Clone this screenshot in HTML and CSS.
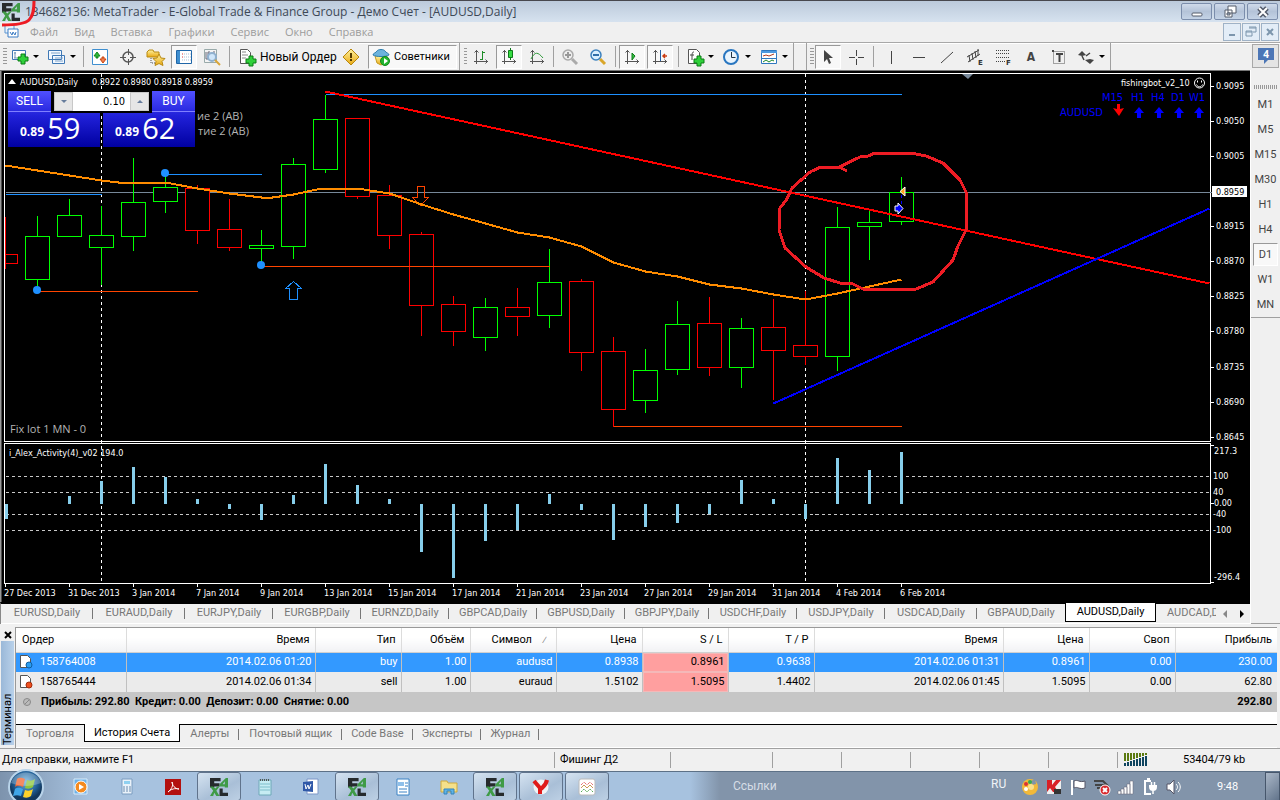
FILE: index.html
```html
<!DOCTYPE html>
<html lang="ru">
<head>
<meta charset="utf-8">
<title>MetaTrader - AUDUSD,Daily</title>
<link rel="stylesheet" href="styles.css">
</head>
<body>
<svg class="defs" aria-hidden="true">
  <defs>
    <symbol id="logo" viewBox="0 0 17 17">
      <path fill="#262a2c" d="M0 0h10v3H4v2h5v3H4v1H0z"/>
      <path fill="#3f9b46" d="M15 0h2v6h0v3h-3V8H9V6zM14 3l-2 3h2z"/>
      <path fill="#3f9b46" d="M0 8h3l2 2 2-2h2l-3 4 3 5H6l-2-3-1 3H0l3-5z"/>
      <path fill="#262a2c" d="M9 10h3v4h5v3H9z"/>
    </symbol>
    <symbol id="plus" viewBox="0 0 12 12"><path d="M4 1h4v3h3v4H8v3H4V8H1V4h3z" fill="#2fd03a" stroke="#0a7d14"/></symbol>
    <symbol id="axes" viewBox="0 0 20 20"><path d="M5.500 3v14M3 14.500h14M3.500 5.500l2-2 2 2M14.500 12.500l2 2-2 2" fill="none" stroke="#555"/></symbol>
    <symbol id="up" viewBox="0 0 12 12"><path d="M6 0l5 6H8v5H4V6H1z"/></symbol>
    <linearGradient id="gold" x2="0" y2="1"><stop stop-color="#fff3a0"/><stop offset="1" stop-color="#e8a813"/></linearGradient>
    <radialGradient id="orb" cx=".5" cy=".35"><stop stop-color="#6fb3e0"/><stop offset=".7" stop-color="#1f5c93"/><stop offset="1" stop-color="#12375c"/></radialGradient>
  </defs>
</svg>

<div class="window">
  <header class="titlebar">
    <svg class="app-logo" width="18" height="18"><use href="#logo"/></svg>
    <h1 class="title">134682136: MetaTrader - E-Global Trade &amp; Finance Group - Демо Счет - [AUDUSD,Daily]</h1>
    <svg class="scribble" width="40" height="28"><path d="M34 0c0 10-1 15-5 19-4 4-14 5-27 5" fill="none" stroke="#ed1c24" stroke-width="3"/></svg>
    <div class="caption-buttons">
      <button class="caption" aria-label="Свернуть"><svg width="16" height="14"><rect x="3" y="8" width="10" height="3" rx="1" fill="#fff" stroke="#555c6b"/></svg></button>
      <button class="caption" aria-label="Восстановить"><svg width="16" height="14"><path d="M6 1h8v7H6zM3 5h7v7H3z" fill="#fff" stroke="#555c6b"/><path d="M5 8h3v2H5z" fill="#a9b7c9" stroke="#555c6b"/></svg></button>
      <button class="caption" aria-label="Закрыть"><svg width="16" height="14"><path d="M4 3l8 8M12 3l-8 8" stroke="#555c6b" stroke-width="5"/><path d="M4 3l8 8M12 3l-8 8" stroke="#fff" stroke-width="2"/></svg></button>
    </div>
  </header>

  <nav class="menubar">
    <svg class="menu-icon" width="16" height="16"><path d="M1 1h9v8H1z" fill="#eaf3fc" stroke="#5b94d1"/><path d="M4 5h10v8H4z" fill="#fff" stroke="#3c7cc4"/><path d="M6 8l2 3 1-3 2 3 1-3" fill="none" stroke="#3c7cc4"/></svg>
    <button class="menu">Файл</button><button class="menu">Вид</button><button class="menu">Вставка</button><button class="menu">Графики</button><button class="menu">Сервис</button><button class="menu">Окно</button><button class="menu">Справка</button>
    <div class="mdi-buttons">
      <button class="mdi" aria-label="Свернуть окно"><svg width="12" height="12"><path d="M3 9h6" stroke="#7d96ad" stroke-width="2"/></svg></button>
      <button class="mdi" aria-label="Восстановить окно"><svg width="12" height="12"><path d="M4 1h7v5H8M1 5h6v5H1zM4 2h7M1 6h6" fill="none" stroke="#7d96ad"/></svg></button>
      <button class="mdi" aria-label="Закрыть окно"><svg width="12" height="12"><path d="M3 3l6 6M9 3l-6 6" stroke="#7d96ad" stroke-width="2"/></svg></button>
    </div>
  </nav>

  <div class="toolbar">
    <div class="group g-main">
      <i class="grip"></i>
      <button class="split" aria-label="Новый график"><svg width="20" height="20"><path d="M2.500 3.500h13v9H2.500z" fill="#fff" stroke="#3f78b5"/><path d="M5 5v6M4 6h2M4 11h3" stroke="#6a8fb5"/><use href="#plus" x="7" y="6" width="12" height="12"/></svg><b class="drop"></b></button>
      <button class="split" aria-label="Профили"><svg width="20" height="20"><path d="M1.500 3.500h13v9H1.500zM5.500 8.500h12v8H5.500z" fill="#f2f8ff" stroke="#3f78b5"/><path d="M4 6h9M8 11h8M8 14h8" stroke="#7ea3c9"/></svg><b class="drop"></b></button>
      <i class="sep s5"></i>
      <button class="tool" aria-label="Обзор рынка"><svg width="20" height="20"><path d="M2.500 2.500h15v15H2.500z" fill="#fff" stroke="#3f8fd0"/><path d="M7 5l3 4H8v2H6V9H4z" fill="#2fb53a" stroke="#118a1c"/><path d="M13 16l3-4h-2v-2h-2v2h-2z" fill="#f08050" stroke="#c84410"/></svg></button>
      <button class="tool" aria-label="Окно данных"><svg width="20" height="20"><circle cx="10" cy="10" r="5" fill="none" stroke="#555" stroke-width="1.500"/><path d="M10.500 2v6M10.500 12v6M2 10.500h6M12 10.500h6" stroke="#555"/></svg></button>
      <button class="tool" aria-label="Навигатор"><svg width="20" height="20"><path d="M1 5l2-2h4l1 2h5v5H1z" fill="url(#gold)" stroke="#b98a12"/><path d="M5 11v5h4" fill="none" stroke="#555" stroke-dasharray="1 1"/><path d="M13 7l2 4 4 .5-3 3 1 4-4-2-4 2 1-4-3-3 4-.5z" fill="url(#gold)" stroke="#b98a12"/></svg></button>
      <button class="tool pressed" aria-label="Терминал"><svg width="20" height="20"><path d="M2.500 3.500h15v13H2.500z" fill="#fff" stroke="#1f66a8"/><path d="M3 4h3v12H3z" fill="#3f8fd0"/><path d="M8 7h1M8 10h1" stroke="#d33"/><path d="M10 7h7M10 10h7M8 13h9" stroke="#a9bfd5" stroke-dasharray="1 1"/></svg></button>
      <button class="tool" aria-label="Тестер стратегий"><svg width="20" height="20"><path d="M2.500 2.500h12v13h-12z" fill="#f4f4f4" stroke="#9aa"/><path d="M4 5v7h2V5M7 4v4M12 4v3" stroke="#667" fill="none"/><circle cx="10" cy="10" r="4" fill="#cfe6fa" stroke="#8fb0cf" stroke-width="2"/><path d="M13 13l5 5" stroke="#d9a63a" stroke-width="2"/></svg></button>
      <i class="sep s7"></i>
      <button class="labelled order" ><svg width="20" height="20"><path d="M3.500 2.500h7l3 3v11h-10z" fill="#fff" stroke="#555"/><path d="M5 5h4M5 8h6M5 11h4" stroke="#888"/><use href="#plus" x="8" y="8" width="12" height="12"/></svg>Новый Ордер</button>
      <button class="tool" aria-label="MetaEditor"><svg width="20" height="20"><path d="M10 2l8 8-8 8-8-8z" fill="url(#gold)" stroke="#b8860b"/><path d="M10 6v5M10 12v2" stroke="#553c00" stroke-width="2"/></svg></button>
      <button class="labelled advisors pressed"><svg width="20" height="20"><path d="M4 9h12l-2 7-4 2-4-2z" fill="url(#gold)" stroke="#c49a20"/><path d="M2 8c0-2 3-2 4-4 1-2 7-2 8 0 1 2 4 2 4 4-3 2-13 2-16 0z" fill="#6cb3dd" stroke="#2f7fae"/><circle cx="14" cy="14" r="4.500" fill="#22b52e" stroke="#118a1c"/><path d="M13 11l4 3-4 3z" fill="#fff"/></svg>Советники</button>
    </div>
    <div class="group g-charts">
      <i class="grip"></i>
      <button class="tool" aria-label="Бары"><svg width="20" height="20"><use href="#axes"/><path d="M11.500 4v9M9 12.500h3M11 5.500h3" stroke="#1e8c28" fill="none"/></svg></button>
      <button class="tool pressed" aria-label="Свечи"><svg width="20" height="20"><use href="#axes"/><path d="M11.500 1v12" stroke="#0d7a18"/><path d="M9.500 3.500h4v7h-4z" fill="#35dc42" stroke="#0d7a18"/></svg></button>
      <button class="tool" aria-label="Линия"><svg width="20" height="20"><use href="#axes"/><path d="M4 12c4-8 7-7 12-1" stroke="#2f9a3a" fill="none"/></svg></button>
      <i class="sep s5"></i>
      <button class="tool" aria-label="Увеличить"><svg width="20" height="20"><path d="M12 12l5 5" stroke="#aaa" stroke-width="3"/><circle cx="8" cy="8" r="5" fill="#eee" stroke="#aaa" stroke-width="1.500"/><path d="M5 8h6M8 5v6" stroke="#999" stroke-width="2"/></svg></button>
      <button class="tool" aria-label="Уменьшить"><svg width="20" height="20"><path d="M12 12l5 5" stroke="#d9a62a" stroke-width="3"/><circle cx="8" cy="8" r="5" fill="#d8efff" stroke="#3b80bd" stroke-width="1.500"/><path d="M5 8h6" stroke="#2f6ea8" stroke-width="2"/></svg></button>
      <i class="sep s6"></i>
      <button class="tool pressed" aria-label="Автопрокрутка"><svg width="20" height="20"><use href="#axes"/><path d="M10 6l3 3-3 4z" fill="#35c142" stroke="#0d7a18"/></svg></button>
      <button class="tool pressed" aria-label="Сдвиг графика"><svg width="20" height="20"><use href="#axes"/><path d="M10.500 3v11" stroke="#235fa5"/><path d="M17 9h-4M15 7l-2 2 2 2" stroke="#c93a10" fill="none" stroke-width="1.500"/></svg></button>
      <i class="sep s8"></i>
      <button class="split" aria-label="Индикаторы"><svg width="20" height="20"><path d="M3.500 2.500h8l3 3v11h-11z" fill="#fff" stroke="#555"/><path d="M9 5c-2 0-2 1-2 8M5 8h4" stroke="#444" fill="none"/><use href="#plus" x="8" y="8" width="12" height="12"/></svg><b class="drop"></b></button>
      <button class="split" aria-label="Периоды"><svg width="20" height="20"><circle cx="9" cy="10" r="7" fill="#e9f4fd" stroke="#2876c0" stroke-width="2"/><path d="M9.500 5v5.500h4" stroke="#234" fill="none"/></svg><b class="drop"></b></button>
      <button class="split" aria-label="Шаблоны"><svg width="20" height="20"><path d="M2.500 3.500h15v13h-15z" fill="#fff" stroke="#2f78bf"/><path d="M2 5h16" stroke="#4d9ae0" stroke-width="2"/><path d="M2 11.500h15" stroke="#2f78bf"/><path d="M4 9l3-1 3 1 5-2" stroke="#b03a20" fill="none"/><path d="M4 15l3-2 3 2 3-2 2 1" stroke="#1f8c2a" fill="none"/></svg><b class="drop"></b></button>
    </div>
    <div class="group g-gap"></div>
    <div class="group g-draw">
      <i class="grip"></i>
      <button class="tool pressed" aria-label="Курсор"><svg width="20" height="20"><path d="M6 3v12l3-3 2 5 2-1-2-5h4z" fill="#444"/></svg></button>
      <button class="tool" aria-label="Перекрестие"><svg width="20" height="20"><path d="M10.500 3v6M10.500 12v6M3 10.500h6M12 10.500h6" stroke="#444"/></svg></button>
      <i class="sep s7"></i>
      <button class="tool" aria-label="Вертикальная линия"><svg width="20" height="20"><path d="M10.500 4v13" stroke="#444"/></svg></button>
      <button class="tool" aria-label="Горизонтальная линия"><svg width="20" height="20"><path d="M4 10.500h12" stroke="#444"/></svg></button>
      <button class="tool" aria-label="Трендовая линия"><svg width="20" height="20"><path d="M4 16L16 5" stroke="#444"/></svg></button>
      <button class="tool" aria-label="Равноудаленный канал"><svg width="20" height="20"><path d="M2 10L14 3M3 15L15 7M4 8l1 7M7 6l1 7M10 4l1 7M13 2v7" stroke="#444" fill="none"/><text class="glyph" x="13" y="18">E</text></svg></button>
      <button class="tool" aria-label="Линии Фибоначчи"><svg width="20" height="20"><path d="M3 3.500h14M3 6.500h14M3 10.500h14M3 14.500h9" stroke="#444" stroke-dasharray="1 1"/><text class="glyph" x="13" y="18">F</text></svg></button>
      <button class="tool text-a" aria-label="Текст">A</button>
      <button class="tool" aria-label="Текстовая метка"><svg width="20" height="20"><path d="M4.500 4.500h11v12h-11z" fill="none" stroke="#555" stroke-dasharray="1 1"/><path d="M7 7h7M10.500 7v8M3 4h2" stroke="#444" stroke-width="2"/></svg></button>
      <button class="split arrows" aria-label="Стрелки"><svg width="20" height="20"><path d="M6 4l4 4-4 1-4-1zM14 17l-5-4 5-1 4 1z" fill="#444"/><path d="M6 9l2 4M10 9l4-3" stroke="#444" stroke-width="1.500"/></svg><b class="drop"></b></button>
    </div>
    <button class="chat" aria-label="Сообщения"><svg width="20" height="20"><path d="M2 2h16v12h-6l-4 4v-4H2z" fill="#4c76b6"/><text class="chat-count" x="10" y="12">4</text></svg></button>
  </div>

  <main class="workspace">
    <section class="chart-pane">
      <div class="chart">
        <svg class="plot" viewBox="0 70 1250 532" preserveAspectRatio="xMinYMin meet">
          <rect y="70" width="1250" height="532"/>
          <path d="M0 70v532" stroke="#999" stroke-width="3"/><path d="M0 70h1250" stroke="#777" stroke-width="2"/>
          <g class="px" transform="translate(.5 .5)">
            <path class="frame" d="M4 73H1210V441H4zM4 443H1210V583H4z"/>
            <path class="frame" d="M1210 86h3M1210 121h3M1210 156h3M1210 226h3M1210 261h3M1210 296h3M1210 331h3M1210 367h3M1210 402h3M1210 437h3M1210 445h3M1210 503h3M1210 582h3M5 583v3M69 583v3M133 583v3M197 583v3M261 583v3M325 583v3M389 583v3M453 583v3M517 583v3M581 583v3M645 583v3M709 583v3M773 583v3M837 583v3M901 583v3"/>
            <path stroke="#c8c8c8" stroke-dasharray="3 3" d="M5 476H1209M5 492H1209M5 514H1209M5 530H1209"/>
            <path stroke="#fff" stroke-dasharray="3 3" d="M101 73V580M805 73V580"/>
            <path stroke="#778899" d="M5 192H1215"/>
            <path stroke="#1e90ff" d="M5 194H101M165 174H261M325 94H901"/>
            <path stroke="#ff4500" d="M37 291H197M613 426H901"/>
            <path class="bull" d="M37 215V285M69 198V215M101 205V284M133 157V250M165 175V212M261 229V264M293 157V258M325 94V172M485 297V350M549 248V327M645 348V412M677 300V374M741 317V387M837 206V370M869 210V259M901 176V224"/>
            <path class="bull" d="M25 236h24v43h-24zM57 215h24v21h-24zM89 235h24v12h-24zM121 202h24v34h-24zM153 187h24v14h-24zM249 245h24v3h-24zM281 164h24v82h-24zM313 119h24v50h-24zM473 307h24v30h-24zM537 282h24v33h-24zM633 370h24v30h-24zM665 324h24v45h-24zM729 328h24v39h-24zM825 227h24v129h-24zM857 222h24v4h-24zM889 192h24v29h-24z"/>
            <path class="bear" d="M5 216V268M197 184V243M229 198V250M357 117V198M389 184V248M421 231V335M453 295V345M517 287V335M581 278V370M613 336V426M709 296V375M773 298V399M805 290V364"/>
            <path class="bear" d="M5 254h12v9h-12M185 188h24v42h-24zM217 229h24v18h-24zM345 118h24v78h-24zM377 195h24v40h-24zM409 234h24v71h-24zM441 304h24v27h-24zM505 307h24v9h-24zM569 281h24v71h-24zM601 351h24v58h-24zM697 323h24v44h-24zM761 327h24v23h-24zM793 345h24v11h-24z"/>
            <path stroke="#ff4500" d="M261 266H549"/>
            <path stroke="#87ceeb" stroke-width="3" d="M6 503V518M69 503V495M101 503V480M133 503V466M165 503V476M197 503V498M229 503V508M261 503V519M293 503V494M325 503V463M357 503V484M389 503V498M421 503V551M453 503V577M485 503V540M517 503V529M549 503V493M581 503V509M613 503V539M645 503V526M677 503V522M709 503V513M741 503V479M773 503V498M805 503V518M837 503V457M869 503V469M901 503V451"/>
            <path fill="none" stroke="#1e90ff" d="M293 281l8 7h-4v11h-8v-11h-4z"/>
            <path fill="none" stroke="#ff4500" d="M417 186h7v11h4l-8 8l-8 -8h5z"/>
            <path fill="none" stroke="#ff8c00" stroke-width="2" d="M5 165L37 170L69 175L101 180L118 182H165L197 188L229 193L261 197L272 197L293 194L321 188H357L389 193L421 204L453 214L485 223L517 232L549 237L581 246L613 262L645 271L677 276L709 284L741 288L773 294L805 299L837 293L869 286L901 279"/>
            <path stroke="#f00" stroke-width="2" d="M325 91L1209 283"/>
            <path stroke="#00f" stroke-width="2" d="M773 403L1209 208"/>
            <path stroke="#00f" stroke-dasharray="3 3" d="M901 194V206"/>
          </g>
          <g fill="#1e90ff"><circle cx="37" cy="290" r="4"/><circle cx="165" cy="173" r="4"/><circle cx="261" cy="265" r="4"/></g>
          <path d="M905 187v9l-5-4.500z" fill="#ffa51e" stroke="#fff"/>
          <path d="M895 206h3v-3l5 5.500-5 5.500v-3h-3z" fill="#00f" stroke="#fff"/>
          <path fill="none" stroke="#ed1c24" stroke-width="3" stroke-linejoin="round" shape-rendering="crispEdges" d="M847 171L839 167H821L810 172L792 188L787 199L780 208L779 230L785 248L806 267L824 278L840 283H851L863 289H916L933 282L953 260L958 246L966 230V192L960 180L943 163L926 156L911 153H875L868 156L860 157L839 167"/>
          <path d="M962 74h11l-5 5z" fill="#778899"/>
          <path d="M8 84l4-5 4 5z" fill="#fff"/>
          <g class="small">
            <text x="20" y="85">AUDUSD,Daily</text><text x="92" y="85">0.8922 0.8980 0.8918 0.8959</text>
            <text x="1121" y="86">fishingbot_v2_10</text>
            <text x="9" y="456">i_Alex_Activity(4)_v02 194.0</text>
            <text x="1216" y="89">0.9095</text><text x="1216" y="124">0.9050</text><text x="1216" y="159">0.9005</text><text x="1216" y="229">0.8915</text><text x="1216" y="264">0.8870</text><text x="1216" y="299">0.8825</text><text x="1216" y="334">0.8780</text><text x="1216" y="370">0.8735</text><text x="1216" y="405">0.8690</text><text x="1216" y="440">0.8645</text>
            <text x="1214" y="454">217.3</text><text x="1213" y="479">100</text><text x="1213" y="495">40</text><text x="1214" y="506">0.00</text><text x="1213" y="517">-40</text><text x="1213" y="533">-100</text><text x="1214" y="580">-296.4</text>
            <text x="4" y="596">27 Dec 2013</text><text x="68" y="596">31 Dec 2013</text><text x="132" y="596">3 Jan 2014</text><text x="196" y="596">7 Jan 2014</text><text x="260" y="596">9 Jan 2014</text><text x="324" y="596">13 Jan 2014</text><text x="388" y="596">15 Jan 2014</text><text x="452" y="596">17 Jan 2014</text><text x="516" y="596">21 Jan 2014</text><text x="580" y="596">23 Jan 2014</text><text x="644" y="596">27 Jan 2014</text><text x="708" y="596">29 Jan 2014</text><text x="772" y="596">31 Jan 2014</text><text x="836" y="596">4 Feb 2014</text><text x="900" y="596">6 Feb 2014</text>
          </g>
          <rect x="1212" y="186" width="35" height="11" fill="#fff"/><text class="small-dark" x="1216" y="195">0.8959</text>
          <g class="note"><text x="197" y="120">ие 2 (AB)</text><text x="198" y="135">тие 2 (AB)</text><text x="10" y="433">Fix lot 1 MN - 0</text></g>
          <g class="signal"><text x="1102" y="101">M15</text><text x="1131" y="101">H1</text><text x="1151" y="101">H4</text><text x="1171" y="101">D1</text><text x="1189" y="101">W1</text><text x="1060" y="116">AUDUSD</text></g>
          <g fill="#00f"><use href="#up" x="1133" y="107" width="12" height="12"/><use href="#up" x="1153" y="107" width="12" height="12"/><use href="#up" x="1173" y="107" width="12" height="12"/><use href="#up" x="1193" y="107" width="12" height="12"/></g>
          <path fill="#f00" d="M1117 104h3v5l4-1-5 8-6-8 4 1z"/>
          <g fill="none" stroke="#fff"><circle cx="1199.500" cy="83" r="5"/><path d="M1196.500 84.500c1 3 5 3 6 0M1197.500 80.500v2M1201.500 80.500v2"/></g>
        </svg>
        <div class="trade">
          <button class="deal"><span class="side">SELL</span><span class="quote">0.89 <strong>59</strong></span></button>
          <button class="deal buy"><span class="side">BUY</span><span class="quote">0.89 <strong>62</strong></span></button>
          <div class="lots"><button class="spin down" aria-label="Меньше"></button><input class="lot" value="0.10" aria-label="Объем"><button class="spin up" aria-label="Больше"></button></div>
        </div>
      </div>
      <div class="chart-tabs">
        <button class="ctab wide">EURUSD,Daily</button><button class="ctab wide">EURAUD,Daily</button><button class="ctab">EURJPY,Daily</button><button class="ctab">EURGBP,Daily</button><button class="ctab">EURNZD,Daily</button><button class="ctab">GBPCAD,Daily</button><button class="ctab">GBPUSD,Daily</button><button class="ctab narrow">GBPJPY,Daily</button><button class="ctab">USDCHF,Daily</button><button class="ctab">USDJPY,Daily</button><button class="ctab wide">USDCAD,Daily</button><button class="ctab last">GBPAUD,Daily</button><button class="ctab active">AUDUSD,Daily</button><button class="ctab clipped">AUDCAD,Daily</button>
        <button class="scroll" aria-label="Назад"><svg width="8" height="10"><path d="M6 1v8L2 5z" fill="#888"/></svg></button>
        <button class="scroll" aria-label="Вперед"><svg width="8" height="10"><path d="M2 1v8l4-4z" fill="#000"/></svg></button>
      </div>
    </section>
    <aside class="periods">
      <i class="grip-h"></i>
      <button class="period">M1</button><button class="period">M5</button><button class="period">M15</button><button class="period">M30</button><button class="period">H1</button><button class="period">H4</button><button class="period pressed">D1</button><button class="period">W1</button><button class="period">MN</button>
      <i class="periods-rest"></i>
    </aside>
  </main>

  <section class="terminal">
    <div class="term-side"><button class="term-close" aria-label="Закрыть терминал"><svg width="8" height="8"><path d="M1 1l6 6M7 1l-6 6" stroke="#000" stroke-width="2"/></svg></button><span class="term-name">Терминал</span></div>
    <div class="term-body">
      <table class="orders">
        <colgroup><col class="c-order"><col class="c-time"><col class="c-mid"><col class="c-vol"><col class="c-mid"><col class="c-mid"><col class="c-mid"><col class="c-mid"><col class="c-time"><col class="c-mid"><col class="c-mid"><col class="c-profit"></colgroup>
        <thead><tr><th>Ордер</th><th>Время</th><th>Тип</th><th>Объём</th><th class="sorted">Символ<span class="sort">∕</span></th><th>Цена</th><th>S / L</th><th>T / P</th><th>Время</th><th>Цена</th><th>Своп</th><th>Прибыль</th></tr></thead>
        <tbody>
          <tr class="selected"><td><svg class="doc" width="15" height="16"><path d="M1.500 1.500h7l3 3v9h-10z" fill="#fff" stroke="#555"/><circle cx="10" cy="11" r="3" fill="#2a9df0" stroke="#0d5da0"/></svg>158764008</td><td>2014.02.06 01:20</td><td>buy</td><td>1.00</td><td>audusd</td><td>0.8938</td><td class="hit">0.8961</td><td>0.9638</td><td>2014.02.06 01:31</td><td>0.8961</td><td>0.00</td><td>230.00</td></tr>
          <tr><td><svg class="doc" width="15" height="16"><path d="M1.500 1.500h7l3 3v9h-10z" fill="#fff" stroke="#555"/><circle cx="10" cy="11" r="3" fill="#f0501e" stroke="#a02c0d"/></svg>158765444</td><td>2014.02.06 01:34</td><td>sell</td><td>1.00</td><td>euraud</td><td>1.5102</td><td class="hit">1.5095</td><td>1.4402</td><td>2014.02.06 01:45</td><td>1.5095</td><td>0.00</td><td>62.80</td></tr>
        </tbody>
        <tfoot><tr><td colspan="11"><svg class="dot" width="10" height="10"><circle cx="5" cy="5" r="3.500" fill="#bbb" stroke="#888"/><path d="M3 7l4-4" stroke="#888"/></svg>Прибыль: 292.80 &nbsp;Кредит: 0.00 &nbsp;Депозит: 0.00 &nbsp;Снятие: 0.00</td><td>292.80</td></tr></tfoot>
      </table>
      <div class="term-tabs"><button class="ttab">Торговля</button><button class="ttab active">История Счета</button><button class="ttab">Алерты</button><button class="ttab">Почтовый ящик</button><button class="ttab tight">Code Base</button><button class="ttab tight">Эксперты</button><button class="ttab tight">Журнал</button></div>
    </div>
  </section>

  <footer class="statusbar">
    <span class="st st-help">Для справки, нажмите F1</span><span class="st st-profile">Фишинг Д2</span><span class="st st-date"></span><span class="st st-cell"></span><span class="st st-cell"></span><span class="st st-cell"></span><span class="st st-cell"></span><span class="st st-cell"></span>
    <span class="st st-net"><svg width="26" height="14"><path d="M2 0v8M5 0v8M8 0v7M11 0v6M14 0v5M17 0v4M20 0v3M23 0v2" stroke="#5b7a10" stroke-width="2"/><path d="M2 10v3M5 9v4M8 8v5M11 7v6M14 6v7M17 5v8M20 4v9M23 3v10" stroke="#0f4560" stroke-width="2"/></svg>53404/79 kb</span>
  </footer>

  <div class="taskbar">
    <button class="start" aria-label="Пуск"><svg width="38" height="38"><circle cx="19" cy="19" r="17" fill="url(#orb)" stroke="#b9d4ea" stroke-width="2"/><path d="M10 11c3-2 5-1 8 0l-2 8c-3-1-5-2-8 0z" fill="#f0652f"/><path d="M20 12c3 1 5 1 8-1l-2 8c-3 2-5 2-8 1z" fill="#8cc63e"/><path d="M8 21c3-2 5-1 8 0l-2 7c-3-1-5-1-8 0z" fill="#3fa5e8"/><path d="M18 22c3 1 5 1 8-1l-2 7c-3 2-5 2-8 1z" fill="#fcd12a"/><path d="M4 15c4-14 26-14 30 0-10 4-20 4-30 0z" fill="#fff" opacity=".25"/></svg></button>
    <button class="task" aria-label="Проигрыватель"><svg width="18" height="18"><path d="M2 1h13v15H2z" fill="#6fb2e8" stroke="#d9ecfb"/><circle cx="9" cy="9" r="6" fill="#f58a1f" stroke="#fff"/><path d="M7 6l5 3-5 3z" fill="#fff"/></svg></button>
    <button class="task" aria-label="Калькулятор"><svg width="18" height="18"><path d="M4 1h10v15H4z" fill="#eaf2fa" stroke="#7a9cc0"/><path d="M6 3h6v3H6z" fill="#8fd0f0"/><path d="M5 9h8M5 11h8M5 13h8" stroke="#6a8cb0" stroke-dasharray="2 1"/></svg></button>
    <button class="task" aria-label="Adobe Reader"><svg width="18" height="18"><path d="M1 1h16v16H1z" fill="#b3100f"/><path d="M8 4c2 3-1 8-4 10 3-3 7-4 11-3-4 0-7-4-7-7z" fill="none" stroke="#fff"/></svg></button>
    <button class="task open" aria-label="MetaTrader"><svg width="18" height="18"><use href="#logo"/></svg></button>
    <button class="task" aria-label="Блокнот"><svg width="18" height="18"><path d="M3 2h12v15H3z" fill="#c6ecf3" stroke="#6fa9b8"/><path d="M4 6h10M4 9h10M4 12h10" stroke="#7fbecb"/><path d="M4 2h10" stroke="#555" stroke-width="2" stroke-dasharray="1 1"/></svg></button>
    <button class="task" aria-label="Word"><svg width="18" height="18"><path d="M5 1h11v15H5z" fill="#fff" stroke="#7d97c8"/><path d="M1 4l10-1v11L1 13z" fill="#2f58a8"/><path d="M3 6l1 5 2-4 1 4 2-5" fill="none" stroke="#fff"/></svg></button>
    <button class="task open" aria-label="MetaTrader 2"><svg width="18" height="18"><use href="#logo"/></svg></button>
    <button class="task" aria-label="WordPad"><svg width="18" height="18"><path d="M3 1h12v16H3z" fill="#fff" stroke="#3b82c4"/><path d="M4 4h6v4H4z" fill="#8fc0ea"/><path d="M11 5h3M11 8h3M5 11h8M5 14h8" stroke="#3b82c4"/></svg></button>
    <button class="task" aria-label="Проводник"><svg width="18" height="18"><path d="M1 3h6l1 2h9v9H1z" fill="#f5e08a" stroke="#cfa93c"/><path d="M4 16v-5h10v5h-3v-3H7v3z" fill="#5fb3e6" stroke="#3484bb"/></svg></button>
    <button class="task open" aria-label="MetaTrader 3"><svg width="18" height="18"><use href="#logo"/></svg></button>
    <button class="task open" aria-label="Яндекс"><svg width="18" height="18"><circle cx="9" cy="9" r="7.500" fill="#f1f3f5"/><path d="M2 3l6 7v6M15 2c-1 5-4 7-6 9" fill="none" stroke="#e01b1b" stroke-width="4"/></svg></button>
    <button class="task open" aria-label="Графики"><svg width="18" height="18"><rect x="1" y="1" width="16" height="16" rx="2" fill="#fff" stroke="#bbb"/><path d="M3 7l3-3 3 3 3-3 3 3" fill="none" stroke="#d33" stroke-dasharray="1 1"/><path d="M3 10l3-3 3 3 3-3 3 3" fill="none" stroke="#c95"/><path d="M3 14l3-3 3 3 3-3 3 3" fill="none" stroke="#5a5" stroke-dasharray="2 1"/></svg></button>
    <span class="links">Ссылки</span>
    <span class="lang">RU</span>
    <div class="tray">
      <svg width="18" height="18"><circle cx="9" cy="9" r="8" fill="#f2b93a"/><path d="M10 3l4-2 1 5-4 1z" fill="#8293a9"/><circle cx="5" cy="6" r="2" fill="#d33"/><circle cx="9" cy="4" r="2" fill="#3a5"/><circle cx="5" cy="11" r="2" fill="#fff"/><circle cx="10" cy="9" r="3" fill="#fbe08a"/></svg>
      <svg width="18" height="18"><path d="M2 2h14v14H2z" fill="#eee"/><path d="M2 2h5v5l4-5h5l-6 7 3 5H8l-3-4-3 4z" fill="#d81f26"/><path d="M9 11h7v5H9z" fill="#333"/></svg>
      <svg width="18" height="18"><path d="M3 2v15" stroke="#fff" stroke-width="2"/><path d="M5 3c4-2 5 2 11 0v7c-6 2-7-2-11 0z" fill="#fff" stroke="#556"/></svg>
      <svg width="18" height="18"><path d="M1 3h9l5 5M2 7h10M4 10h8" stroke="#444" stroke-width="2" fill="none"/><circle cx="12" cy="12" r="5" fill="#d8272b" stroke="#fff"/><path d="M10 10l4 4M14 10l-4 4" stroke="#fff" stroke-width="2"/></svg>
      <svg width="18" height="18"><path d="M1 13h3v3H1zM4 11h3v5H4zM7 9h3v7H7zM10 6h3v10h-3zM13 3h3v13h-3z" fill="#fff" stroke="#667" stroke-width=".5"/></svg>
      <svg width="18" height="18"><path d="M10 3H4v13h6M6 1h3" fill="none" stroke="#fff" stroke-width="2"/><path d="M8 7h8v2c0 3-2 4-4 4s-4-1-4-4z" fill="#fff"/><path d="M10.500 4v3M13.500 4v3M12 13v3" stroke="#fff" stroke-width="1.500"/></svg>
      <svg width="18" height="18"><path d="M2 6h3l4-4v14l-4-4H2z" fill="#fff" stroke="#556"/><path d="M11 6c2 2 2 4 0 6M13 4c3 3 3 7 0 10" fill="none" stroke="#fff"/></svg>
    </div>
    <time class="clock">9:48</time>
    <button class="desktop" aria-label="Свернуть все окна"></button>
  </div>
</div>
</body>
</html>
```
FILE: styles.css
```css
* { box-sizing: border-box; }
body { margin: 0; background: #f0f0f0; color: #000; font: 11px/14px Roboto, sans-serif; }
button, input { margin: 0; padding: 0; border: 0; background: none; color: inherit; font: inherit; white-space: nowrap; }
svg { display: block; flex: none; }
.defs { position: absolute; width: 0; height: 0; }
.window { display: flex; flex-direction: column; min-height: 100vh; overflow: hidden; }

/* title and menu */
.titlebar { position: relative; display: flex; align-items: center; height: 22px; padding: 0 2px; border-top: 1px solid #48484e; background: linear-gradient(#bccadb, #d6e2ef); }
.app-logo { margin-right: 5px; }
.title { flex: 1; margin: 0; color: #3d4856; font: 12px/20px "Open Sans", sans-serif; white-space: nowrap; }
.scribble { position: absolute; left: 0; top: 0; z-index: 2; }
.caption-buttons { display: flex; gap: 2px; }
.caption { display: grid; place-items: center; width: 31px; height: 17px; border: 1px solid #7b8dab; border-radius: 2px; background: linear-gradient(#cfdaea, #b4c3d8 50%, #c4d3e6); }
.menubar { display: flex; align-items: center; height: 20px; padding-left: 4px; }
.menu-icon { margin-right: 2px; }
.menu { padding: 0 8px; color: #9c9c9c; font: 11px/18px "Open Sans", sans-serif; }
.mdi-buttons { display: flex; gap: 1px; margin-left: auto; padding-right: 1px; }
.mdi { display: grid; place-items: center; width: 18px; height: 18px; border: 1px solid #9fb2c6; background: #e3edf7; }

/* toolbar */
.toolbar { display: flex; height: 28px; border-top: 1px solid #a8a8a8; box-shadow: inset 0 1px #fff; }
.group { display: flex; align-items: center; padding-left: 3px; border-right: 1px solid #a0a0a0; }
.g-main { width: 460px; }
.g-charts { width: 334px; padding-left: 4px; }
.g-gap { width: 13px; }
.g-draw { width: 304px; padding-left: 3px; }
.grip { width: 4px; height: 18px; background: repeating-linear-gradient(#999 0 1px, #f0f0f0 1px 3px); }
.tool, .split, .labelled { display: flex; flex: none; align-items: center; height: 24px; }
.tool { justify-content: center; width: 28px; }
.split { width: 37px; padding-left: 3px; gap: 3px; }
.drop { width: 0; border: 3px solid transparent; border-top-color: #000; border-bottom: 0; }
.pressed { border: 1px solid #fff; border-top-color: #999; border-left-color: #999; background: #f8f8f8; }
.tool.pressed { width: 26px; margin: 0 1px; }
.order { width: 104px; padding-left: 4px; gap: 3px; font-size: 12px; }
.advisors { width: 89px; margin-left: 3px; padding-left: 2px; gap: 3px; }
.sep { flex: none; height: 21px; background: linear-gradient(#a0a0a0, #a0a0a0) center / 1px 100% no-repeat; }
.s5 { width: 5px; } .s6 { width: 6px; } .s7 { width: 7px; } .s8 { width: 8px; }
.glyph { fill: #333; font: bold 7px "DejaVu Sans", sans-serif; }
.text-a { color: #444; font: bold 12px/20px "DejaVu Sans Condensed", sans-serif; }
.chat { display: grid; place-items: center; width: 27px; height: 24px; margin: 1px 1px 0 auto; border: 1px solid #a8a8a8; background: #e4e4e4; }
.chat-count { fill: #fff; font: bold 10px "Open Sans", sans-serif; text-anchor: middle; }

/* chart */
.workspace { display: flex; flex: 1; min-height: 0; }
.chart-pane { display: flex; flex: 1; flex-direction: column; min-width: 0; border-right: 1px solid #fff; }
.chart { position: relative; flex: 1; background: #000; overflow: hidden; }
.plot { width: 100%; height: auto; }
.px { fill: none; shape-rendering: crispEdges; }
.frame { stroke: #fff; }
.bull { fill: #000; stroke: #0f0; }
.bear { fill: #000; stroke: #f00; }
.small { fill: #fff; font: 9px "DejaVu Sans Condensed", sans-serif; }
.small-dark { fill: #000; font: 9px "DejaVu Sans Condensed", sans-serif; }
.note { fill: #b4b4b4; font: 11px "Open Sans", sans-serif; }
.signal { fill: #00f; font: 11px "DejaVu Sans Condensed", sans-serif; }
.trade { position: absolute; left: 8px; top: 21px; display: flex; gap: 3px; color: #fff; }
.deal { display: flex; flex-direction: column; align-items: flex-start; width: 92px; height: 56px; background: linear-gradient(#5050ff, #2020d8 45%, #0000a0); }
.buy { align-items: flex-end; }
.side { width: 43px; height: 22px; border-bottom: 1px solid #8080ff; font: 12px/20px Roboto, sans-serif; text-align: center; }
.quote { width: 92px; padding-left: 12px; font: bold 12px/32px "Open Sans", sans-serif; text-align: left; }
.quote strong { font: 29px/32px "Open Sans", sans-serif; vertical-align: -3px; }
.lots { position: absolute; left: 43px; top: 0; display: flex; width: 101px; height: 22px; padding: 1px 3px 2px; background: #000; }
.lot { flex: 1; min-width: 0; padding-right: 5px; background: #fff; color: #000; font: 11px/18px "DejaVu Sans Condensed", sans-serif; text-align: right; }
.spin { display: grid; place-items: center; width: 19px; border: 1px solid #c8c8c8; background: #e6e6e6; }
.spin::before { content: ""; border: 3px solid transparent; }
.down::before { border-top-color: #667c9c; border-bottom: 0; }
.up::before { border-bottom-color: #667c9c; border-top: 0; }

/* chart tabs */
.chart-tabs { display: flex; align-items: flex-start; height: 22px; border-top: 2px solid #000; border-left: 1px solid #888; box-shadow: inset 0 -1px #fff; color: #777; }
.ctab { position: relative; flex: none; width: 88px; line-height: 18px; }
.wide { width: 92px; }
.narrow { width: 84px; }
.ctab::after { content: ""; position: absolute; right: 0; top: 4px; height: 11px; border-right: 1px solid #777; }
.last::after, .active::after, .clipped::after { display: none; }
.ctab.active { width: 91px; height: 19px; margin-top: -1px; border: 1px solid #000; border-top: 0; background: #fff; color: #000; }
.clipped { flex: 0 1 60px; min-width: 0; padding-left: 11px; overflow: hidden; text-align: left; }
.scroll { display: grid; place-items: center; width: 17px; height: 19px; }

/* timeframes */
.periods { display: flex; flex: none; flex-direction: column; align-items: center; width: 29px; padding-top: 15px; background: #f0f0f0; color: #444; }
.grip-h { width: 24px; height: 4px; margin-bottom: 3px; background: repeating-linear-gradient(90deg, #999 0 1px, #f0f0f0 1px 2px); }
.period { width: 25px; height: 23px; margin: 1px 0; }
.periods-rest { flex: 1; align-self: stretch; border-top: 1px solid #a0a0a0; border-bottom: 1px solid #a0a0a0; }

/* terminal */
.terminal { display: flex; height: 125px; padding: 3px 3px 0 0; border-bottom: 1px solid #a0a0a0; }
.term-side { display: flex; flex-direction: column; align-items: center; width: 15px; }
.term-close { height: 14px; padding-top: 1px; }
.term-name { flex: none; width: 13px; height: 104px; background: linear-gradient(90deg, #b9d1ea, #9ab8d8); line-height: 13px; writing-mode: vertical-rl; transform: rotate(180deg); }
.term-body { flex: 1; min-width: 0; border-top: 1px solid #999; border-left: 1px solid #999; background: #fff; }
.orders { width: 100%; border-collapse: collapse; table-layout: fixed; text-align: right; }
.c-order { width: 110px; } .c-time { width: 189px; } .c-mid { width: 86px; } .c-vol { width: 69px; }
.orders th { height: 24px; padding: 0 5px 0 6px; border-right: 1px solid #dcdcdc; border-bottom: 1px solid #d0d0d0; background: linear-gradient(#fff 40%, #f1f2f4); font-weight: 400; }
.orders th:first-child, .orders td:first-child { text-align: left; }
.sort { padding: 0 5px 0 12px; color: #777; font-size: 9px; }
.orders td { height: 20px; padding: 0 3px; border-right: 1px solid #c0c0c0; background: #ebebeb; }
.orders th:last-child, .orders td:last-child { padding-right: 5px; border-right: 0; }
.orders .selected td { background: #3399ff; color: #fff; }
.orders .hit, .orders .selected .hit { background: #ff9f9f; color: #000; box-shadow: inset 0 0 0 1px #f4b8b8; }
.doc, .dot { display: inline-block; margin-right: 6px; vertical-align: middle; }
.dot { margin: 0 9px 0 3px; }
.orders tfoot td { border: 0; background: #c6c6c6; font-weight: 700; }
.term-tabs { display: flex; align-items: flex-start; height: 23px; margin-top: 12px; border-top: 1px solid #000; background: #f0f0f0; color: #777; }
.ttab { position: relative; padding: 0 10px; line-height: 18px; }
.tight { padding: 0 9px; }
.ttab::after { content: ""; position: absolute; right: 0; top: 4px; height: 11px; border-right: 1px solid #777; }
.ttab:first-child::after, .ttab.active::after { display: none; }
.ttab.active { height: 18px; margin-top: -1px; padding: 0 9px; border: 1px solid #000; border-top: 0; background: #fff; color: #000; }

/* status bar */
.statusbar { display: flex; align-items: center; height: 22px; }
.st { flex: none; height: 16px; border-right: 1px solid #a0a0a0; line-height: 16px; }
.st-help { flex: 1; padding-left: 2px; }
.st-profile { width: 116px; padding-left: 5px; }
.st-date { width: 102px; }
.st-cell { width: 69px; }
.st-net { display: flex; gap: 34px; align-items: center; width: 162px; padding-left: 5px; border: 0; }

/* taskbar */
.taskbar { display: flex; align-items: center; height: 30px; border-top: 1px solid #5d7187; background: linear-gradient(90deg, #7d93ad, #a7c2df 90px, #a7c2df 690px, #8294aa 720px); }
.start { z-index: 1; width: 58px; height: 38px; padding-left: 7px; }
.task { display: grid; place-items: center; width: 44px; height: 29px; margin: 0 1px; border: 1px solid transparent; border-radius: 3px; }
.open { border-color: #60738c; background: linear-gradient(150deg, #d5e3f1, #a9bfd7 60%, #bdd0e4); }
.links { flex: 1; height: 26px; padding-left: 123px; color: #d6dde6; font: 12px/24px Roboto, sans-serif; }
.lang { width: 30px; height: 26px; color: #f0f3f7; font: 12px/20px Roboto, sans-serif; }
.tray { display: flex; gap: 6px; }
.clock { width: 82px; padding-left: 34px; color: #fff; }
.desktop { width: 15px; height: 29px; border: 1px solid #46566b; background: linear-gradient(135deg, #aab7c7, #62748b); }
```
